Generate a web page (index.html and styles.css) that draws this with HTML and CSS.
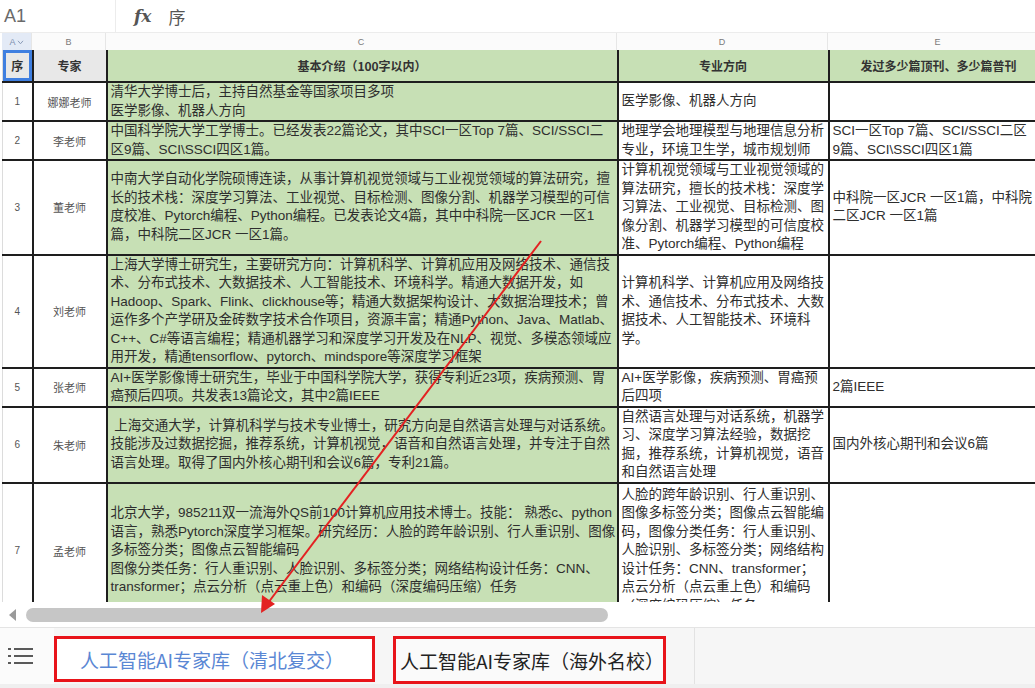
FILE: index.html
```html
<!DOCTYPE html>
<html lang="zh-CN">
<head>
<meta charset="utf-8">
<title>人工智能AI专家库</title>
<link rel="stylesheet" href="styles.css">
</head>
<body>
<div class="app">
  <div class="formula-bar">
    <div class="namebox">A1</div>
    <div class="fx">fx</div>
    <div class="formula">序</div>
  </div>

  <div class="sheet">
    <div class="letters">
      <div class="letter sel">A<svg class="caret" viewBox="0 0 8 6" width="7" height="5"><path d="M1 1 L4 4.5 L7 1" fill="none" stroke="#8a9bb8" stroke-width="1.2"/></svg></div>
      <div class="letter">B</div>
      <div class="letter">C</div>
      <div class="letter">D</div>
      <div class="letter">E</div>
    </div>
    <table class="grid">
      <colgroup>
        <col class="c-a"><col class="c-b"><col class="c-c"><col class="c-d"><col class="c-e">
      </colgroup>
      <tr class="r-head">
        <td class="h-gray h-sel">序</td>
        <td class="h-gray">专家</td>
        <td class="h-green">基本介绍（100字以内）</td>
        <td class="h-green">专业方向</td>
        <td class="h-green">发过多少篇顶刊、多少篇普刊</td>
      </tr>
      <tr class="r1">
        <td class="num">1</td><td class="name">娜娜老师</td>
        <td class="txt green">清华大学博士后，主持自然基金等国家项目多项<br>医学影像、机器人方向</td>
        <td class="txt">医学影像、机器人方向</td>
        <td class="txt"></td>
      </tr>
      <tr class="r2">
        <td class="num">2</td><td class="name">李老师</td>
        <td class="txt green">中国科学院大学工学博士。已经发表22篇论文，其中SCI一区Top 7篇、SCI/SSCI二<br>区9篇、SCI\SSCI四区1篇。</td>
        <td class="txt">地理学会地理模型与地理信息分析<br>专业，环境卫生学，城市规划师</td>
        <td class="txt">SCI一区Top 7篇、SCI/SSCI二区<br>9篇、SCI\SSCI四区1篇</td>
      </tr>
      <tr class="r3">
        <td class="num">3</td><td class="name">董老师</td>
        <td class="txt green">中南大学自动化学院硕博连读，从事计算机视觉领域与工业视觉领域的算法研究，擅<br>长的技术栈：深度学习算法、工业视觉、目标检测、图像分割、机器学习模型的可信<br>度校准、Pytorch编程、Python编程。已发表论文4篇，其中中科院一区JCR 一区1<br>篇，中科院二区JCR 一区1篇。</td>
        <td class="txt">计算机视觉领域与工业视觉领域的<br>算法研究，擅长的技术栈：深度学<br>习算法、工业视觉、目标检测、图<br>像分割、机器学习模型的可信度校<br>准、Pytorch编程、Python编程</td>
        <td class="txt">中科院一区JCR 一区1篇，中科院<br>二区JCR 一区1篇</td>
      </tr>
      <tr class="r4">
        <td class="num">4</td><td class="name">刘老师</td>
        <td class="txt green">上海大学博士研究生，主要研究方向：计算机科学、计算机应用及网络技术、通信技<br>术、分布式技术、大数据技术、人工智能技术、环境科学。精通大数据开发，如<br>Hadoop、Spark、Flink、clickhouse等；精通大数据架构设计、大数据治理技术；曾<br>运作多个产学研及金砖数字技术合作项目，资源丰富；精通Python、Java、Matlab、<br>C++、C#等语言编程；精通机器学习和深度学习开发及在NLP、视觉、多模态领域应<br>用开发，精通tensorflow、pytorch、mindspore等深度学习框架</td>
        <td class="txt">计算机科学、计算机应用及网络技<br>术、通信技术、分布式技术、大数<br>据技术、人工智能技术、环境科<br>学。</td>
        <td class="txt"></td>
      </tr>
      <tr class="r5">
        <td class="num">5</td><td class="name">张老师</td>
        <td class="txt green">AI+医学影像博士研究生，毕业于中国科学院大学，获得专利近23项，疾病预测、胃<br>癌预后四项。共发表13篇论文，其中2篇IEEE</td>
        <td class="txt">AI+医学影像，疾病预测、胃癌预<br>后四项</td>
        <td class="txt">2篇IEEE</td>
      </tr>
      <tr class="r6">
        <td class="num">6</td><td class="name">朱老师</td>
        <td class="txt green">&nbsp;上海交通大学，计算机科学与技术专业博士，研究方向是自然语言处理与对话系统。<br>技能涉及过数据挖掘，推荐系统，计算机视觉，语音和自然语言处理，并专注于自然<br>语言处理。取得了国内外核心期刊和会议6篇，专利21篇。</td>
        <td class="txt">自然语言处理与对话系统，机器学<br>习、深度学习算法经验，数据挖<br>掘，推荐系统，计算机视觉，语音<br>和自然语言处理</td>
        <td class="txt">国内外核心期刊和会议6篇</td>
      </tr>
      <tr class="r7">
        <td class="num">7</td><td class="name">孟老师</td>
        <td class="txt green">北京大学，985211双一流海外QS前100计算机应用技术博士。技能： 熟悉c、python<br>语言，熟悉Pytorch深度学习框架。研究经历：人脸的跨年龄识别、行人重识别、图像<br>多标签分类；图像点云智能编码<br>图像分类任务：行人重识别、人脸识别、多标签分类；网络结构设计任务：CNN、<br>transformer；点云分析（点云重上色）和编码（深度编码压缩）任务</td>
        <td class="txt">人脸的跨年龄识别、行人重识别、<br>图像多标签分类；图像点云智能编<br>码，图像分类任务：行人重识别、<br>人脸识别、多标签分类；网络结构<br>设计任务：CNN、transformer；<br>点云分析（点云重上色）和编码<br>（深度编码压缩）任务</td>
        <td class="txt"></td>
      </tr>
    </table>
  </div>

  <div class="hscroll">
    <svg class="scroll-arrow" viewBox="0 0 8 12" width="8" height="12"><path d="M7 0 L0 6 L7 12 Z" fill="#9a9a9a"/></svg>
    <div class="thumb"></div>
  </div>

  <div class="tabbar">
    <div class="menu">
      <svg viewBox="0 0 26 18" width="26" height="18">
        <g stroke="#333" stroke-width="1.6">
          <line x1="0" y1="2" x2="3" y2="2"/><line x1="6" y1="2" x2="25" y2="2"/>
          <line x1="0" y1="9" x2="3" y2="9"/><line x1="6" y1="9" x2="25" y2="9"/>
          <line x1="0" y1="16" x2="3" y2="16"/><line x1="6" y1="16" x2="25" y2="16"/>
        </g>
      </svg>
    </div>
    <div class="tab active">人工智能AI专家库（清北复交）</div>
    <div class="tab second">人工智能AI专家库（海外名校）</div>
    <div class="tab-rest"></div>
  </div>

  <svg class="annot" viewBox="0 0 1035 688" width="1035" height="688">
    <line x1="541" y1="241" x2="268" y2="603" stroke="#e32222" stroke-width="2"/>
    <path d="M261 613 L262 595 L275 604 Z" fill="#e32222"/>
  </svg>
</div>
</body>
</html>
```

FILE: styles.css
```css
* { box-sizing: border-box; }

html, body {
  margin: 0;
  padding: 0;
  background: #ffffff;
}

body {
  font-family: "Liberation Sans", "Noto Sans CJK SC", sans-serif;
  color: #2b2b2b;
}

.app {
  position: relative;
  width: 1035px;
  height: 688px;
  overflow: hidden;
}

/* formula bar */
.formula-bar {
  height: 33px;
  display: flex;
  align-items: center;
  border-bottom: 1px solid #ececec;
}

.namebox {
  width: 116px;
  height: 100%;
  display: flex;
  align-items: center;
  padding-left: 4px;
  font-size: 18px;
  color: #6a6a6a;
  border-right: 1px solid #ececec;
}

.fx {
  margin-left: 18px;
  font-family: "DejaVu Serif", "Liberation Serif", serif;
  font-style: italic;
  font-weight: bold;
  font-size: 17px;
  color: #555;
}

.formula {
  margin-left: 17px;
  font-family: "Noto Sans CJK SC", sans-serif;
  font-size: 17px;
  color: #555;
}

/* sheet */
.sheet {
  height: 569px;
  overflow: hidden;
  padding-left: 2px;
}

.letters {
  display: grid;
  grid-template-columns: 30px 74px 511px 211px 220px;
  height: 17px;
  background: #fbfbfb;
}

.letter {
  font-size: 9px;
  color: #7a7a7a;
  display: flex;
  align-items: center;
  justify-content: center;
  border-right: 1px solid #e6e6e6;
}

.letter.sel {
  background: #e3eaf6;
  color: #7d8fb0;
}

.caret { margin-left: 1px; margin-top: 2px; }

.grid {
  border-collapse: collapse;
  table-layout: fixed;
  width: 1046px;
}

.c-a { width: 30px; }
.c-b { width: 74px; }
.c-c { width: 511px; }
.c-d { width: 211px; }
.c-e { width: 220px; }

.grid td {
  border: 2px solid #1e1e1e;
  padding: 0 3px;
  vertical-align: middle;
  overflow: hidden;
  white-space: nowrap;
}

.grid tr td:first-child {
  border-left: 1px solid #dcdcdc;
}

.r-head td {
  height: 32px;
  border-top: none;
  font-family: "Noto Sans CJK SC", sans-serif;
  font-weight: bold;
  font-size: 12px;
  text-align: center;
  color: #333;
}

.h-gray { background: #e8e8e8; }
.h-green { background: #c7e0b5; }

.h-sel {
  box-shadow: inset 0 0 0 3px #3f7fe0;
  font-size: 13px;
}

.r1 td { height: 36px; }
.r2 td { height: 38px; }
.r3 td { height: 93px; }
.r4 td { height: 111px; }
.r5 td { height: 36px; }
.r6 td { height: 73px; }
.r7 td { height: 136px; }

.num {
  font-size: 10px;
  color: #555;
  text-align: center;
}

.name {
  font-family: "Noto Sans CJK SC", sans-serif;
  font-size: 11px;
  color: #555;
  text-align: center;
}

.txt {
  font-size: 13.5px;
  line-height: 18.5px;
  color: #2e2e2e;
}

.green { background: #c7e0b5; }

/* horizontal scroll */
.hscroll {
  height: 25px;
  display: flex;
  align-items: center;
  padding-left: 9px;
  background: #ffffff;
}

.thumb {
  margin-left: 9px;
  width: 582px;
  height: 14px;
  border-radius: 7px;
  background: #c6c6c6;
}

/* sheet tabs */
.tabbar {
  height: 61px;
  display: flex;
  align-items: flex-start;
  background: #f6f6f6;
  border-top: 1px solid #e4e4e4;
  border-bottom: 4px solid #efefef;
}

.menu {
  width: 54px;
  height: 100%;
  display: flex;
  align-items: center;
  padding-left: 8px;
  background: #fbfbfb;
}

.tab {
  margin-top: 8px;
  height: 46px;
  display: flex;
  align-items: center;
  font-family: "Noto Sans CJK SC", sans-serif;
  font-size: 19px;
  border: 3px solid #e8141a;
}

.tab.active {
  width: 321px;
  padding-left: 23px;
  color: #5a87d4;
  background: #ffffff;
}

.tab.second {
  margin-left: 18px;
  width: 273px;
  height: 48px;
  padding-left: 4px;
  color: #222;
  background: #fafafa;
}

.tab-rest {
  margin-left: 28px;
  height: 100%;
  flex: 1;
  border-left: 1px solid #e2e2e2;
}

/* annotation overlay */
.annot {
  position: absolute;
  top: 0;
  left: 0;
  pointer-events: none;
}
```
